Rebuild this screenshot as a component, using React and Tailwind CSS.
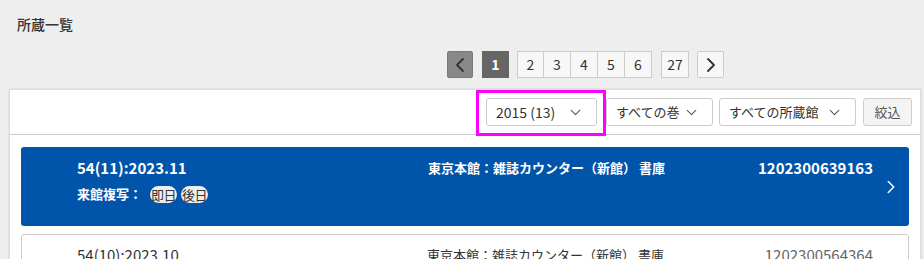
import { ChevronDown, ChevronLeft, ChevronRight } from 'lucide-react';

const font = "font-['Noto_Sans_CJK_JP','Noto_Sans',sans-serif]";

function Select({ label, width, text = 'text-[13px]' }) {
  return (
    <div className={`flex h-[28px] items-center justify-between rounded-[3px] border border-[#cccccc] bg-white pl-[9px] pr-[12px] text-[#333] ${text} ${width}`}>
      <span className="leading-[20px]">{label}</span>
      <ChevronDown size={17} strokeWidth={1.5} className="text-[#555]" />
    </div>
  );
}

function Badge({ children }) {
  return (
    <span className="inline-flex h-[17px] w-[27px] items-center justify-center rounded-full bg-[#eeeeee] text-[13px] font-normal leading-none tracking-[-0.5px] text-[#333]">
      {children}
    </span>
  );
}

export default function App() {
  const pages = ['2', '3', '4', '5', '6'];

  return (
    <div className={`h-[259px] overflow-hidden bg-[#eeeeee] ${font}`}>
      <h1 className="pl-[17px] pt-[14px] text-[14px] font-medium leading-[20px] text-[#333]">所蔵一覧</h1>

      {/* pagination */}
      <div className="mt-[17px] flex items-center pl-[447px] text-[14px]">
        <button className="flex h-[27px] w-[26px] items-center justify-center rounded-[2px] border border-[#7a7a7a] bg-[#888888] text-[#333]">
          <ChevronLeft size={24} strokeWidth={1.8} />
        </button>
        <span className="ml-[9px] flex h-[27px] w-[27px] items-center justify-center bg-[#666666] font-bold text-white">1</span>
        <div className="ml-[8px] flex">
          {pages.map((p, i) => (
            <span
              key={p}
              className={`flex h-[27px] w-[27px] items-center justify-center border border-[#cccccc] bg-[#f7f7f7] text-[#333] ${i > 0 ? 'border-l-0' : ''}`}
            >
              {p}
            </span>
          ))}
        </div>
        <span className="ml-[9px] flex h-[27px] w-[28px] items-center justify-center border border-[#cccccc] bg-[#f7f7f7] text-[#333]">27</span>
        <button className="ml-[8px] flex h-[27px] w-[27px] items-center justify-center rounded-[2px] border border-[#cccccc] bg-[#f7f7f7] text-[#333]">
          <ChevronRight size={24} strokeWidth={1.8} />
        </button>
      </div>

      {/* panel */}
      <div className="ml-[9px] mr-[3px] mt-[11px] border border-[#dddddd] bg-white shadow-[0_0_2px_rgba(0,0,0,0.12)]">
        <div className="flex h-[45px] items-center justify-end border-b border-[#cccccc] pr-[8px]">
          <div className="relative">
            <Select label="2015 (13)" width="w-[111px]" text="text-[14px]" />
            <div className="pointer-events-none absolute -left-[10px] -top-[8px] h-[46px] w-[130px] border-[3px] border-[#ff00ff]" />
          </div>
          <div className="ml-[9px]">
            <Select label="すべての巻" width="w-[107px]" />
          </div>
          <div className="ml-[6px]">
            <Select label="すべての所蔵館" width="w-[137px]" />
          </div>
          <button className="ml-[7px] flex h-[28px] w-[49px] items-center justify-center rounded-[3px] border border-[#cccccc] bg-[#f4f4f4] text-[13px] text-[#555]">
            絞込
          </button>
        </div>

        <div className="px-[11px] pt-[12px]">
          {/* selected item */}
          <div className="flex h-[79px] rounded-[3px] bg-[#0055aa] text-white">
            <div className="grid flex-1 grid-cols-[351px_1fr_auto] pl-[56px] pt-[11px]">
              <div className="flex flex-col gap-[6px]">
                <span className="text-[15px] font-bold leading-[20px]">54(11):2023.11</span>
                <div className="flex items-center gap-[4px] text-[13px] font-bold leading-[20px]">
                  <span className="mr-[4px]">来館複写：</span>
                  <Badge>即日</Badge>
                  <Badge>後日</Badge>
                </div>
              </div>
              <span className="text-[13px] font-bold leading-[20px]">東京本館：雑誌カウンター（新館） 書庫</span>
              <span className="text-right text-[15px] font-bold leading-[20px]">1202300639163</span>
            </div>
            <div className="flex w-[36px] items-center justify-center">
              <ChevronRight size={22} strokeWidth={1.6} />
            </div>
          </div>

          {/* next item */}
          <div className="mt-[8px] flex h-[79px] rounded-[3px] border border-[#cccccc] bg-white text-[#333]">
            <div className="grid flex-1 grid-cols-[350px_1fr_auto] pl-[55px] pt-[10px]">
              <span className="text-[15px] leading-[20px]">54(10):2023.10</span>
              <span className="text-[13px] leading-[20px]">東京本館：雑誌カウンター（新館） 書庫</span>
              <span className="text-right text-[15px] leading-[20px] text-[#666]">1202300564364</span>
            </div>
            <div className="w-[35px]" />
          </div>
        </div>
      </div>
    </div>
  );
}
